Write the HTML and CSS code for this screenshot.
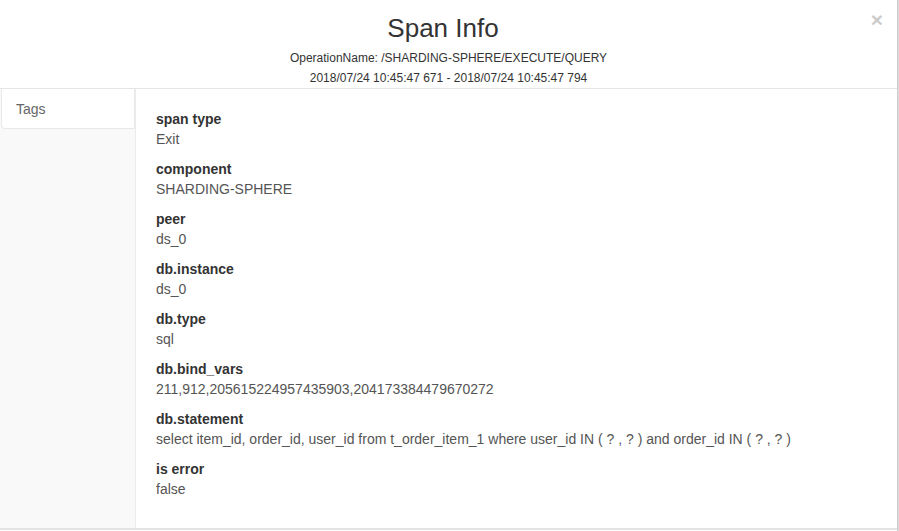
FILE: index.html
```html
<!DOCTYPE html>
<html>
<head>
<meta charset="utf-8">
<link rel="stylesheet" href="styles.css">
</head>
<body>
<div class="modal">
  <div class="modal-header">
    <button class="close">&times;</button>
    <h4 class="title">Span Info</h4>
    <div class="sub">OperationName: /SHARDING-SPHERE/EXECUTE/QUERY</div>
    <div class="sub">2018/07/24 10:45:47 671 - 2018/07/24 10:45:47 794</div>
  </div>
  <div class="modal-body">
    <div class="sidebar">
      <div class="tab">Tags</div>
    </div>
    <div class="content">
      <div class="item"><div class="label">span type</div><div class="value">Exit</div></div>
      <div class="item"><div class="label">component</div><div class="value">SHARDING-SPHERE</div></div>
      <div class="item"><div class="label">peer</div><div class="value">ds_0</div></div>
      <div class="item"><div class="label">db.instance</div><div class="value">ds_0</div></div>
      <div class="item"><div class="label">db.type</div><div class="value">sql</div></div>
      <div class="item"><div class="label">db.bind_vars</div><div class="value">211,912,205615224957435903,204173384479670272</div></div>
      <div class="item"><div class="label">db.statement</div><div class="value">select item_id, order_id, user_id from t_order_item_1 where user_id IN ( ? , ? ) and order_id IN ( ? , ? )</div></div>
      <div class="item"><div class="label">is error</div><div class="value">false</div></div>
    </div>
  </div>
</div>
</body>
</html>
```
FILE: styles.css
```css
html, body {
  margin: 0;
  padding: 0;
}
body {
  background: #d9d9d9;
  font-family: "Liberation Sans", Arial, sans-serif;
  color: #333;
  width: 899px;
  height: 531px;
  overflow: hidden;
}
.modal {
  width: 897px;
  height: 531px;
  background: #fff;
  border-right: 1px solid #cfcfcf;
  display: flex;
  flex-direction: column;
}
.modal-header {
  position: relative;
  border-bottom: 1px solid #e5e5e5;
  text-align: center;
  padding-top: 13px;
  box-sizing: border-box;
  height: 89px;
}
.close {
  position: absolute;
  top: 9px;
  right: 14px;
  padding: 0;
  border: 0;
  background: transparent;
  font-family: "Liberation Sans", Arial, sans-serif;
  font-size: 21px;
  font-weight: bold;
  line-height: 1;
  color: #000;
  opacity: 0.2;
}
.title {
  margin: 0 0 5px 0;
  font-size: 26px;
  line-height: 30px;
  font-weight: normal;
  color: #333;
  padding-right: 11px;
}
.sub {
  font-size: 12px;
  line-height: 20px;
  color: #333;
}
.modal-body {
  display: flex;
  height: 439px;
  border-bottom: 2px solid #e3e3e3;
}
.sidebar {
  width: 135px;
  background: #f9f9f9;
  border-right: 1px solid #ececec;
  flex: none;
}
.tab {
  height: 40px;
  box-sizing: border-box;
  line-height: 40px;
  padding-left: 14px;
  font-size: 14px;
  color: #666;
  background: #fff;
  border: 1px solid #e8e8e8;
  border-top: 0;
  border-radius: 0 0 0 4px;
  margin-left: 1px;
}
.content {
  padding: 20px 0 0 20px;
  flex: 1;
}
.item {
  margin-bottom: 10px;
}
.label {
  font-size: 14px;
  line-height: 20px;
  font-weight: bold;
  color: #333;
}
.value {
  font-size: 14px;
  line-height: 20px;
  color: #555;
}
```
